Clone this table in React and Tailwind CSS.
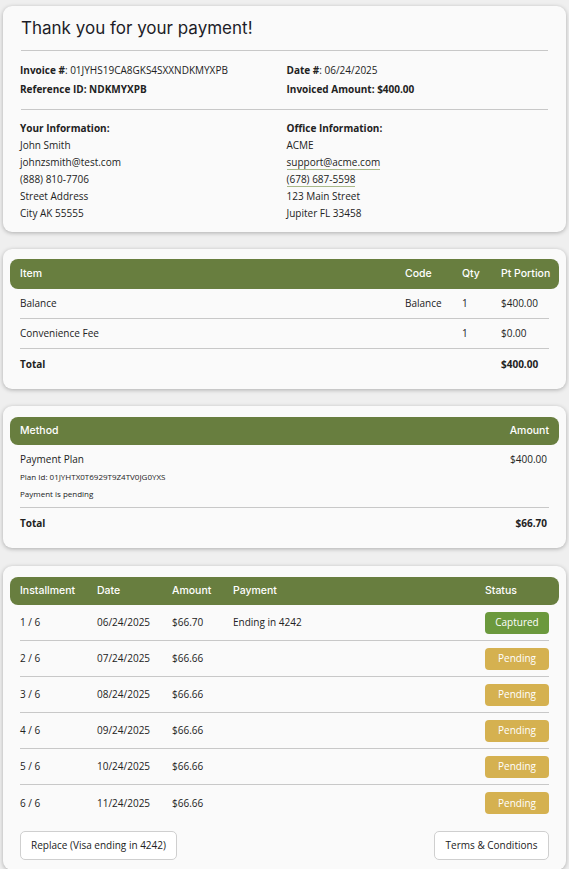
const head = { fontFamily: 'Inter, "Liberation Sans", sans-serif' };

const Card = ({ className = '', children }) => (
  <section className={`rounded-[9px] bg-[#fafafa] shadow-[0_1px_4px_rgba(0,0,0,0.28)] ${className}`}>{children}</section>
);

const HeadBar = ({ cols, className = '', children }) => (
  <div
    style={head}
    className={`grid items-center whitespace-nowrap rounded-[8px] bg-[#687e3f] px-[10px] text-[10.5px] font-medium text-white ${cols} ${className}`}
  >
    {children}
  </div>
);

const itemCols = 'grid-cols-[1fr_57px_39px_48px]';
const instCols = 'grid-cols-[77px_75px_61px_1fr_64px]';

const installments = [
  ['1 / 6', '06/24/2025', '$66.70', 'Ending in 4242', 'Captured'],
  ['2 / 6', '07/24/2025', '$66.66', '', 'Pending'],
  ['3 / 6', '08/24/2025', '$66.66', '', 'Pending'],
  ['4 / 6', '09/24/2025', '$66.66', '', 'Pending'],
  ['5 / 6', '10/24/2025', '$66.66', '', 'Pending'],
  ['6 / 6', '11/24/2025', '$66.66', '', 'Pending'],
];

export default function App() {
  return (
    <div
      className="min-h-screen bg-[#efefef] px-[3px] pt-[6px] pb-4 text-[10px] text-[#222]"
      style={{ fontFamily: '"Open Sans", "Liberation Sans", sans-serif' }}
    >
      <Card className="px-[17px] pt-[8px] pb-[10px]">
        <h1 style={head} className="h-[28px] pl-[1px] text-[17px] leading-[28px] font-normal text-[#1d1d28]">
          Thank you for your payment!
        </h1>
        <div className="mx-[1px] mt-[8px] border-t border-[#c8c8c8]" />
        <div className="mt-[10px] grid grid-cols-2 leading-[19px]">
          <div>
            <span className="font-bold">Invoice #</span>: 01JYHS19CA8GKS4SXXNDKMYXPB
          </div>
          <div className="pl-[2px]">
            <span className="font-bold">Date #</span>: 06/24/2025
          </div>
          <div className="font-bold">Reference ID: NDKMYXPB</div>
          <div className="pl-[2px] font-bold">Invoiced Amount: $400.00</div>
        </div>
        <div className="mx-[1px] mt-[10px] border-t border-[#c8c8c8]" />
        <div className="mt-[10px] grid grid-cols-2 leading-[17px]">
          <div>
            <div className="font-bold">Your Information:</div>
            <div>John Smith</div>
            <div>johnzsmith@test.com</div>
            <div>(888) 810-7706</div>
            <div>Street Address</div>
            <div>City AK 55555</div>
          </div>
          <div className="pl-[2px]">
            <div className="font-bold">Office Information:</div>
            <div>ACME</div>
            <div>
              <span className="inline-block border-b border-[#a9b98a] leading-[14px]">support@acme.com</span>
            </div>
            <div>
              <span className="inline-block border-b border-[#a9b98a] leading-[14px]">(678) 687-5598</span>
            </div>
            <div>123 Main Street</div>
            <div>Jupiter FL 33458</div>
          </div>
        </div>
      </Card>

      <Card className="mt-[17px] px-[7px] pt-[10px] pb-[10px]">
        <HeadBar cols={itemCols} className="h-[30px]">
          <div>Item</div>
          <div>Code</div>
          <div>Qty</div>
          <div>Pt Portion</div>
        </HeadBar>
        <div className="mx-[10px]">
          <div className={`grid h-[30px] items-center border-b border-[#c8c8c8] ${itemCols}`}>
            <div>Balance</div>
            <div>Balance</div>
            <div>1</div>
            <div>$400.00</div>
          </div>
          <div className={`grid h-[30px] items-center border-b border-[#c8c8c8] ${itemCols}`}>
            <div>Convenience Fee</div>
            <div />
            <div>1</div>
            <div>$0.00</div>
          </div>
          <div className={`grid h-[30px] items-center font-bold ${itemCols}`}>
            <div>Total</div>
            <div />
            <div />
            <div>$400.00</div>
          </div>
        </div>
      </Card>

      <Card className="mt-[17px] px-[7px] pt-[11px] pb-[10px]">
        <HeadBar cols="grid-cols-[1fr_auto]" className="h-[28px]">
          <div>Method</div>
          <div>Amount</div>
        </HeadBar>
        <div className="mx-[10px]">
          <div className="flex justify-between border-b border-[#c8c8c8] pt-[6px] pb-[5px]">
            <div>
              <div className="leading-[17px]">Payment Plan</div>
              <div className="text-[8px] leading-[17px]">Plan Id: 01JYHTX0T6929T9Z4TV0JG0YXS</div>
              <div className="text-[8px] leading-[17px]">Payment is pending</div>
            </div>
            <div className="pr-[2px] leading-[17px]">$400.00</div>
          </div>
          <div className="flex h-[30px] items-center justify-between pr-[2px] font-bold">
            <div>Total</div>
            <div>$66.70</div>
          </div>
        </div>
      </Card>

      <Card className="mt-[18px] px-[7px] pt-[11px] pb-[10px]">
        <HeadBar cols={instCols} className="h-[28px]">
          <div>Installment</div>
          <div>Date</div>
          <div>Amount</div>
          <div>Payment</div>
          <div>Status</div>
        </HeadBar>
        <div className="mx-[10px]">
          {installments.map(([n, date, amt, pay, status], i) => (
            <div
              key={n}
              className={`grid h-[36px] items-center ${instCols} ${
                i < installments.length - 1 ? 'border-b border-[#c8c8c8]' : ''
              }`}
            >
              <div>{n}</div>
              <div>{date}</div>
              <div>{amt}</div>
              <div>{pay}</div>
              <div
                className={`flex h-[22px] items-center justify-center rounded-[4px] text-white ${
                  status === 'Captured' ? 'bg-[#6b993d]' : 'bg-[#d5b150]'
                }`}
              >
                {status}
              </div>
            </div>
          ))}
          <div className="mt-[10px] flex justify-between">
            <button className="h-[29px] w-[157px] rounded-[5px] border border-[#cfcfcf] bg-white text-[10px] text-[#222]">
              Replace (Visa ending in 4242)
            </button>
            <button className="h-[29px] w-[115px] rounded-[5px] border border-[#cfcfcf] bg-white text-[10px] text-[#222]">
              Terms &amp; Conditions
            </button>
          </div>
        </div>
      </Card>
    </div>
  );
}
